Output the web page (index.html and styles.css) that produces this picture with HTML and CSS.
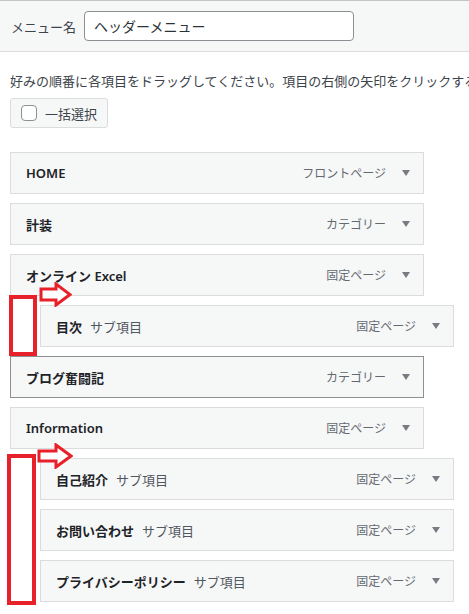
FILE: index.html
```html
<!DOCTYPE html>
<html lang="ja">
<head>
    <meta charset="UTF-8">
    <title>メニュー構造</title>
    <link rel="stylesheet" href="styles.css">
</head>
<body>

<div class="menu-name-bar">
    <label for="menu-name">メニュー名</label>
    <input type="text" id="menu-name" value="ヘッダーメニュー">
</div>

<div class="menu-body">
    <p class="drag-hint">好みの順番に各項目をドラッグしてください。項目の右側の矢印をクリックすると、追加の設定オプションが表示されます。</p>
    <div class="bulk-select">
        <label class="bulk-btn"><span class="check"></span>一括選択</label>
    </div>

    <ul class="menu-list">
        <li class="menu-item"><span class="item-title">HOME</span><span class="item-type">フロントページ</span><span class="item-arrow"></span></li>
        <li class="menu-item"><span class="item-title">計装</span><span class="item-type">カテゴリー</span><span class="item-arrow"></span></li>
        <li class="menu-item"><span class="item-title">オンライン Excel</span><span class="item-type">固定ページ</span><span class="item-arrow"></span></li>
        <li class="menu-item sub"><span class="item-title">目次</span><span class="is-sub">サブ項目</span><span class="item-type">固定ページ</span><span class="item-arrow"></span></li>
        <li class="menu-item hover"><span class="item-title">ブログ奮闘記</span><span class="item-type">カテゴリー</span><span class="item-arrow"></span></li>
        <li class="menu-item"><span class="item-title">Information</span><span class="item-type">固定ページ</span><span class="item-arrow"></span></li>
        <li class="menu-item sub"><span class="item-title">自己紹介</span><span class="is-sub">サブ項目</span><span class="item-type">固定ページ</span><span class="item-arrow"></span></li>
        <li class="menu-item sub"><span class="item-title">お問い合わせ</span><span class="is-sub">サブ項目</span><span class="item-type">固定ページ</span><span class="item-arrow"></span></li>
        <li class="menu-item sub"><span class="item-title">プライバシーポリシー</span><span class="is-sub">サブ項目</span><span class="item-type">固定ページ</span><span class="item-arrow"></span></li>
    </ul>
</div>

<!-- annotations -->
<svg class="mark-arrow arrow-one" width="33" height="25" viewBox="0 0 33 25">
    <path d="M2 7 H17 V2 L31 12.5 L17 23 V18 H2 Z" fill="#fff" stroke="#e8202a" stroke-width="3"/>
</svg>
<svg class="mark-arrow arrow-two" width="36" height="26" viewBox="0 0 36 26">
    <path d="M2 8 H19 V2 L34 13 L19 24 V18 H2 Z" fill="#fff" stroke="#e8202a" stroke-width="3"/>
</svg>
<div class="mark-box box-one"></div>
<div class="mark-box box-two"></div>

</body>
</html>
```

FILE: styles.css
```css
body {
    font-family: "Noto Sans", "Noto Sans CJK JP", sans-serif;
    font-size: 13px;
    color: #3c434a;
    background-color: #fff;
    margin: 0;
    padding: 0;
    overflow: hidden;
    position: relative;
}
.menu-name-bar {
    display: flex;
    align-items: center;
    height: 50px;
    padding: 0 11px;
    background-color: #f6f7f7;
    border-top: 1px solid #c3c4c7;
    border-bottom: 1px solid #dcdcde;
}
.menu-name-bar label {
    color: #3c434a;
    margin-right: 8px;
}
.menu-name-bar input {
    width: 270px;
    height: 30px;
    box-sizing: border-box;
    padding: 0 9px;
    border: 1px solid #8c8f94;
    border-radius: 4px;
    font-family: "Noto Sans", "Noto Sans CJK JP", sans-serif;
    font-size: 14px;
    color: #2c3338;
    background-color: #fff;
}
.menu-body {
    padding: 0 10px;
}
.drag-hint {
    margin: 19px 0 7px;
    line-height: 20px;
    white-space: nowrap;
}
.bulk-btn {
    display: inline-flex;
    align-items: center;
    height: 30px;
    box-sizing: border-box;
    padding: 0 10px;
    border: 1px solid #dcdcde;
    border-radius: 3px;
    background-color: #f6f7f7;
    color: #3c434a;
}
.bulk-btn .check {
    width: 16px;
    height: 16px;
    box-sizing: border-box;
    border: 1px solid #8c8f94;
    border-radius: 4px;
    background-color: #fff;
    margin-right: 8px;
}
.menu-list {
    list-style: none;
    margin: 24px 0 0;
    padding: 0;
}
.menu-item {
    display: flex;
    align-items: center;
    width: 414px;
    height: 42px;
    box-sizing: border-box;
    margin-bottom: 9px;
    padding: 0 13px 0 15px;
    border: 1px solid #dcdcde;
    background-color: #f6f7f7;
}
.menu-item.sub {
    margin-left: 30px;
}
.menu-item.hover {
    border-color: #8c8f94;
}
.item-title {
    font-weight: 600;
    color: #1d2327;
}
.is-sub {
    margin-left: 8px;
    color: #50575e;
}
.item-type {
    margin-left: auto;
    margin-right: 16px;
    font-size: 12px;
    color: #646970;
}
.item-arrow {
    width: 0;
    height: 0;
    border-left: 4px solid transparent;
    border-right: 4px solid transparent;
    border-top: 6px solid #787c82;
}
.mark-arrow {
    position: absolute;
}
.arrow-one {
    left: 39px;
    top: 282px;
}
.arrow-two {
    left: 37px;
    top: 443px;
}
.mark-box {
    position: absolute;
    box-sizing: border-box;
    border: 4px solid #e8202a;
}
.box-one {
    left: 9px;
    top: 295px;
    width: 28px;
    height: 61px;
}
.box-two {
    left: 7px;
    top: 454px;
    width: 29px;
    height: 151px;
}
```
